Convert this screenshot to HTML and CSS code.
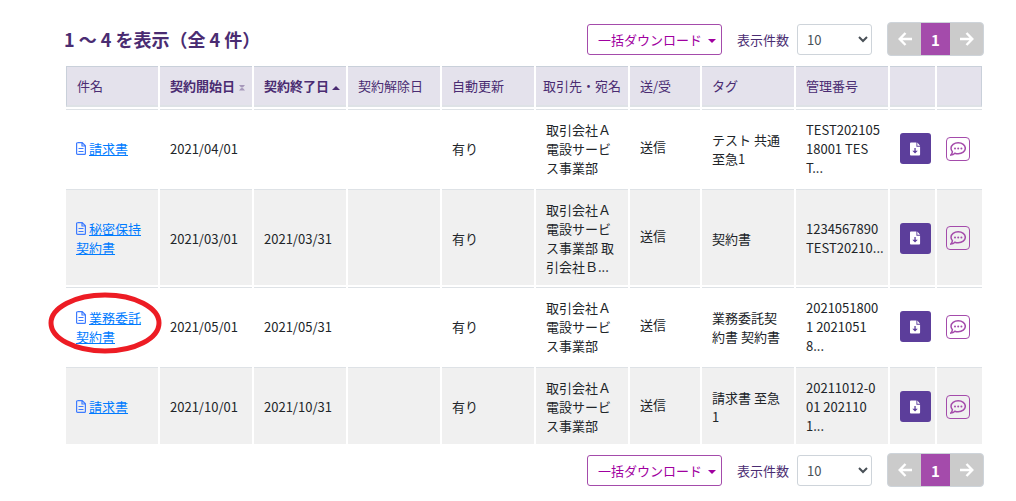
FILE: index.html
```html
<!DOCTYPE html>
<html lang="ja">
<head>
<meta charset="utf-8">
<meta name="viewport" content="width=device-width, initial-scale=1">
<title>契約一覧</title>
<link rel="stylesheet" href="styles.css">
</head>
<body>
<svg class="defs" aria-hidden="true">
  <symbol id="i-file" viewBox="0 0 10 13"><path d="M1.500.6H6.200L9.400 3.800V11.400a1 1 0 0 1-1 1H1.600a1 1 0 0 1-1-1V1.600a1 1 0 0 1 1-1zM6 .5V4H9.500M2.500 6.500H7.500M2.500 9.500H7.500" fill="none" stroke="currentColor" stroke-width="1.200"/></symbol>
  <symbol id="i-down" viewBox="0 0 12 14"><path d="M1 0H7V4.500H11V13a1 1 0 0 1-1 1H1a1 1 0 0 1-1-1V1a1 1 0 0 1 1-1zM8 0 11 3.500H8z" fill="#fff"/><path d="M4.800 6H6.200V8.800H8.500L5.500 12 2.500 8.800H4.800z" fill="#5c3e9b"/></symbol>
  <symbol id="i-chat" viewBox="0 0 16 14"><path d="M8.200.8C12.200.8 15.300 3.200 15.300 6.300S12.200 11.800 8.200 11.800C7 11.800 5.900 11.600 4.900 11.200 3.900 12.200 2.500 13 .8 13.100 1.700 12.200 2.300 11.200 2.400 9.700 1.500 8.700 1 7.600 1 6.300 1 3.200 4.200.8 8.200.8z" fill="none" stroke="currentColor" stroke-width="1.500"/><circle cx="5" cy="6.500" r="1" fill="currentColor"/><circle cx="8.200" cy="6.500" r="1" fill="currentColor"/><circle cx="11.400" cy="6.500" r="1" fill="currentColor"/></symbol>
  <symbol id="i-left" viewBox="0 0 14 14"><path d="M7.500 1 1.700 7l5.800 6M2 7H14" fill="none" stroke="currentColor" stroke-width="2.400"/></symbol>
  <symbol id="i-right" viewBox="0 0 14 14"><path d="M6.500 1 12.300 7l-5.800 6M12 7H0" fill="none" stroke="currentColor" stroke-width="2.400"/></symbol>
</svg>
<main class="page">
  <header class="toolbar">
    <h1 class="title">1 ～ 4 を表示（全 4 件）</h1>
    <button class="bulk" type="button">一括ダウンロード<span class="caret"></span></button>
    <label class="size-label" for="size-top">表示件数</label>
    <select class="size" id="size-top"><option>10</option></select>
    <nav class="pager" aria-label="ページ">
      <button class="step" type="button" aria-label="前へ"><svg class="arrow"><use href="#i-left"/></svg></button>
      <button class="current" type="button">1</button>
      <button class="step" type="button" aria-label="次へ"><svg class="arrow"><use href="#i-right"/></svg></button>
    </nav>
  </header>

  <table class="list">
    <colgroup>
      <col class="w-text"><col class="w-text"><col class="w-text"><col class="w-text"><col class="w-text"><col class="w-text">
      <col class="w-mid"><col class="w-text"><col class="w-text"><col class="w-icon"><col class="w-icon">
    </colgroup>
    <thead>
      <tr>
        <th>件名</th>
        <th class="sortable">契約開始日<svg class="sort both" viewBox="0 0 8 7"><path d="M1 1H7L4 4.500zM1 6.500H7L4 3z"/></svg></th>
        <th class="sortable">契約終了日<svg class="sort" viewBox="0 0 8 7"><path d="M0 6H8L4 2z"/></svg></th>
        <th>契約解除日</th><th>自動更新</th><th class="partner">取引先・宛名</th><th>送/受</th><th>タグ</th><th>管理番号</th><th></th><th></th>
      </tr>
    </thead>
    <tbody>
      <tr>
        <td><a href="#"><svg class="file"><use href="#i-file"/></svg>請求書</a></td>
        <td>2021/04/01</td><td></td><td></td><td>有り</td>
        <td>取引会社Ａ電設サービス事業部</td><td class="flow">送信</td><td>テスト 共通 至急1</td>
        <td class="code">TEST202105<br>18001 TES<br>T...</td>
        <td><button class="download" type="button" aria-label="ダウンロード"><svg class="down"><use href="#i-down"/></svg></button></td>
        <td class="talk"><button class="comment" type="button" aria-label="コメント"><svg class="chat"><use href="#i-chat"/></svg></button></td>
      </tr>
      <tr>
        <td><a href="#"><svg class="file"><use href="#i-file"/></svg>秘密保持契約書</a></td>
        <td>2021/03/01</td><td>2021/03/31</td><td></td><td>有り</td>
        <td>取引会社Ａ電設サービス事業部 取引会社Ｂ...</td><td class="flow">送信</td><td>契約書</td>
        <td class="code">1234567890<br>TEST20210...</td>
        <td><button class="download" type="button" aria-label="ダウンロード"><svg class="down"><use href="#i-down"/></svg></button></td>
        <td class="talk"><button class="comment" type="button" aria-label="コメント"><svg class="chat"><use href="#i-chat"/></svg></button></td>
      </tr>
      <tr>
        <td><span class="marked"><a href="#"><svg class="file"><use href="#i-file"/></svg>業務委託契約書</a><svg class="ring" viewBox="0 0 114 64"><ellipse cx="57" cy="32" rx="54" ry="28"/></svg></span></td>
        <td>2021/05/01</td><td>2021/05/31</td><td></td><td>有り</td>
        <td>取引会社Ａ電設サービス事業部</td><td class="flow">送信</td><td>業務委託契約書 契約書</td>
        <td class="code">2021051800<br>1 2021051<br>8...</td>
        <td><button class="download" type="button" aria-label="ダウンロード"><svg class="down"><use href="#i-down"/></svg></button></td>
        <td class="talk"><button class="comment" type="button" aria-label="コメント"><svg class="chat"><use href="#i-chat"/></svg></button></td>
      </tr>
      <tr>
        <td><a href="#"><svg class="file"><use href="#i-file"/></svg>請求書</a></td>
        <td>2021/10/01</td><td>2021/10/31</td><td></td><td>有り</td>
        <td>取引会社Ａ電設サービス事業部</td><td class="flow">送信</td><td>請求書 至急<br>1</td>
        <td class="code">20211012-0<br>01 202110<br>1...</td>
        <td><button class="download" type="button" aria-label="ダウンロード"><svg class="down"><use href="#i-down"/></svg></button></td>
        <td class="talk"><button class="comment" type="button" aria-label="コメント"><svg class="chat"><use href="#i-chat"/></svg></button></td>
      </tr>
    </tbody>
  </table>

  <footer class="toolbar bottom">
    <button class="bulk" type="button">一括ダウンロード<span class="caret"></span></button>
    <label class="size-label" for="size-bottom">表示件数</label>
    <select class="size" id="size-bottom"><option>10</option></select>
    <nav class="pager" aria-label="ページ">
      <button class="step" type="button" aria-label="前へ"><svg class="arrow"><use href="#i-left"/></svg></button>
      <button class="current" type="button">1</button>
      <button class="step" type="button" aria-label="次へ"><svg class="arrow"><use href="#i-right"/></svg></button>
    </nav>
  </footer>
</main>
</body>
</html>
```
FILE: styles.css
```css
* { box-sizing: border-box; }
body {
  margin: 0;
  background: #fff;
  color: #212529;
  font: 13px/19px "Noto Sans CJK JP", sans-serif;
}
button, select { font: inherit; }
button { cursor: pointer; }
.defs { position: absolute; width: 0; height: 0; }
.page { padding: 22px 32px 0 64px; }

.toolbar { display: flex; align-items: center; justify-content: flex-end; color: #4a2c72; }
.title { flex: 1; margin: 0; font-size: 18px; line-height: 24px; font-weight: 700; }
.bulk {
  display: flex;
  align-items: center;
  gap: 6px;
  height: 31px;
  padding: 0 5px 0 10px;
  border: 1px solid #a44bab;
  border-radius: 3px;
  background: #fff;
  color: #a000a0;
  white-space: nowrap;
}
.caret { border: 4px solid transparent; border-top-color: currentColor; border-bottom: 0; margin-top: 3px; }
.size-label { margin: 0 8px 0 15px; }
.size {
  width: 75px;
  height: 31px;
  padding: 0 0 0 5px;
  border: 1px solid #ced4da;
  border-radius: 3px;
  background: #fff;
  color: #495057;
}
.pager {
  display: flex;
  width: 97px;
  height: 34px;
  margin-left: 15px;
  border: 1px solid #ced4da;
  border-radius: 4px;
  background: #cbcbcb;
  overflow: hidden;
}
.pager button {
  display: flex;
  align-items: center;
  justify-content: center;
  padding: 0;
  border: 0;
  background: none;
  color: #fff;
}
.pager .step { flex: 1; }
.pager .current { width: 29px; background: #a44bab; font-weight: 700; font-size: 15px; }
.arrow { width: 14px; height: 14px; }

.list { width: 100%; margin-top: 8px; table-layout: fixed; border-spacing: 2px; }
.w-text { width: 92px; }
.w-mid { width: 70px; }
.w-icon { width: 45px; }
.list th, .list td {
  padding: 10px 8px 10px 10px;
  vertical-align: middle;
  text-align: left;
  word-break: break-all;
}
.list th {
  border-top: 1px solid #c9d0da;
  border-bottom: 2px solid #dee2e6;
  background: #e4e2ec;
  color: #4a2c72;
  font-weight: 400;
  height: 41px;
  padding-top: 8px;
  padding-bottom: 10px;
  white-space: nowrap;
}
.list th:first-child { border-left: 1px solid #c9d0da; }
.list th:last-child { border-right: 1px solid #c9d0da; }
.list th.sortable { font-weight: 700; }
.list th.partner { padding-left: 7px; padding-right: 6px; }
.sort { width: 8px; height: 7px; margin-left: 3px; fill: currentColor; }
.both { opacity: 0.4; }
.list td { border-top: 1px solid #dee2e6; }
.list tbody tr:nth-child(even) td { background: #f0f0f0; padding-bottom: 9px; }
.list tbody tr .flow, .list tbody tr:nth-child(even) .flow { padding-bottom: 14px; }
.list .code { white-space: nowrap; padding-right: 0; }
.list .talk { padding-left: 9px; }
.list a { color: #007bff; text-decoration: underline; }
.file { width: 10px; height: 13px; margin-right: 3px; vertical-align: -1px; color: #3d7bff; }
.marked { position: relative; display: block; }
.ring {
  position: absolute;
  left: -28px;
  top: -17px;
  width: 114px;
  height: 64px;
  fill: none;
  stroke: #ed1c24;
  stroke-width: 5px;
  pointer-events: none;
}
.download, .comment { display: flex; align-items: center; justify-content: center; padding: 0; }
.download { width: 31px; height: 31px; border: 0; border-radius: 3px; background: #5c3e9b; }
.down { width: 11px; height: 14px; }
.comment { width: 24px; height: 24px; border: 1px solid #a44bab; border-radius: 4px; background: transparent; color: #a44bab; }
.chat { width: 16px; height: 14px; flex: none; }
.bottom { margin-top: 7px; padding-bottom: 12px; }
```
